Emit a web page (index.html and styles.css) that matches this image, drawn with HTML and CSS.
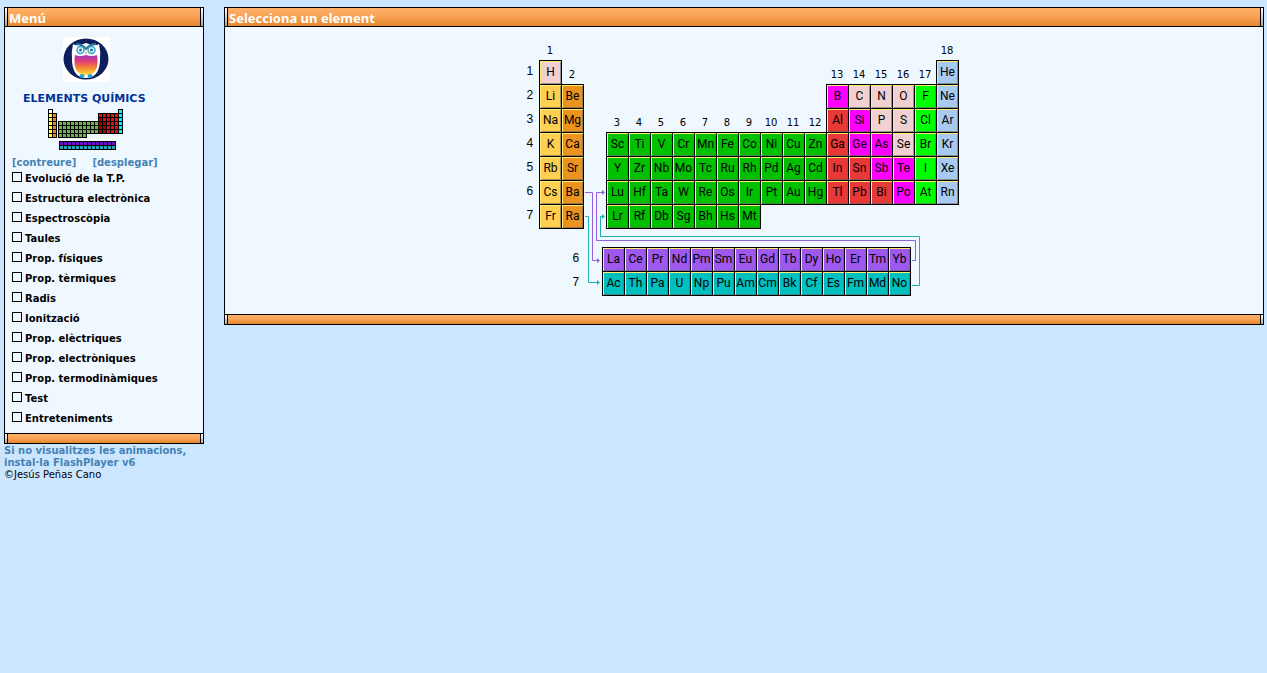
FILE: index.html
```html
<!DOCTYPE html>
<html lang="ca">
<head>
<meta charset="utf-8">
<title>Elements químics</title>
<link rel="stylesheet" href="styles.css">
</head>
<body>
<div class="page">
  <aside class="side">
    <section class="panel">
      <header class="bar"><h2>Menú</h2></header>
      <div class="panel-body menu">
        <svg class="logo" width="47" height="45" viewBox="0 0 47 45" role="img" aria-label="Òliba">
          <defs>
            <linearGradient id="belly" x1="0" y1="0" x2="0" y2="1">
              <stop offset="0" stop-color="#9a3cc0"/>
              <stop offset=".3" stop-color="#e03a78"/>
              <stop offset=".65" stop-color="#f58a30"/>
              <stop offset="1" stop-color="#ffe040"/>
            </linearGradient>
          </defs>
          <rect width="47" height="45" fill="#fff"/>
          <ellipse cx="23" cy="22" rx="22.500" ry="20.500" fill="#0c1f5c"/>
          <path d="M10 7Q14 10 23 6Q32 10 36 7Q38 15 37 24Q36 41 23 41Q10 41 9 24Q8 15 10 7Z" fill="#fff"/>
          <path d="M12 18Q17 20 23 18Q29 20 34 18Q37 38 23 38Q9 38 12 18Z" fill="url(#belly)"/>
          <path d="M13 7Q19 7 23 12Q27 7 33 7" fill="none" stroke="#2a7090" stroke-width="2"/>
          <circle cx="17.500" cy="13" r="3.500" fill="#e8fbff" stroke="#38a4cc" stroke-width="1.500"/>
          <circle cx="28.500" cy="13" r="3.500" fill="#e8fbff" stroke="#38a4cc" stroke-width="1.500"/>
          <circle cx="17.500" cy="13" r="1.500" fill="#28708c"/>
          <circle cx="28.500" cy="13" r="1.500" fill="#28708c"/>
          <path d="M22 15h2l-1 3z" fill="#f0a040"/>
          <ellipse cx="19" cy="39" rx="2.500" ry="2" fill="#2aa0cc"/>
          <ellipse cx="27" cy="39" rx="2.500" ry="2" fill="#2aa0cc"/>
        </svg>
        <h1>ELEMENTS QUÍMICS</h1>
        <svg class="mini" width="75" height="41" viewBox="0 0 75 41" shape-rendering="crispEdges" role="img" aria-label="Taula periòdica">
          <path d="M0 0h4v4H0z" fill="#fff"/>
          <path d="M0 4h4v24H0z" fill="#ffff20"/>
          <path d="M4 4h4v24H4z" fill="#f08020"/>
          <path d="M10 12h40v12H38v4H10z" fill="#70b050"/>
          <path d="M50 4h20v20H50z" fill="#e01010"/>
          <path d="M50 8h4v4h4v12h-8z" fill="#9c0000"/>
          <path d="M70 0h4v24h-4z" fill="#00f4ff"/>
          <path d="M11 32h56v4H11z" fill="#6a10c8"/>
          <path d="M11 36h56v4H11z" fill="#20a8b8"/>
          <g fill="none" stroke="#000">
            <path d="M0 .5h5M0 4.500h9M0 8.500h9M0 12.500h9M0 16.500h9M0 20.500h9M0 24.500h9M0 28.500h9M.5 0v29M4.500 0v29M8.500 4v25"/>
            <path d="M10 12.500h40M10 16.500h40M10 20.500h40M10 24.500h40M10 28.500h29M10.500 12v17M14.500 12v17M18.500 12v17M22.500 12v17M26.500 12v17M30.500 12v17M34.500 12v17M38.500 12v17M42.500 12v13M46.500 12v13"/>
            <path d="M70 .5h5M50 4.500h25M50 8.500h25M50 12.500h25M50 16.500h25M50 20.500h25M50 24.500h25M50.500 4v21M54.500 4v21M58.500 4v21M62.500 4v21M66.500 4v21M70.500 0v25M74.500 0v25"/>
            <path d="M11 32.500h57M11 36.500h57M11 40.500h57M11.500 32v9M15.500 32v9M19.500 32v9M23.500 32v9M27.500 32v9M31.500 32v9M35.500 32v9M39.500 32v9M43.500 32v9M47.500 32v9M51.500 32v9M55.500 32v9M59.500 32v9M63.500 32v9M67.500 32v9"/>
          </g>
        </svg>
        <nav class="toggles"><a href="#">[contreure]</a><a href="#">[desplegar]</a></nav>
        <ul class="items">
          <li><label><input type="checkbox">Evolució de la T.P.</label></li>
          <li><label><input type="checkbox">Estructura electrònica</label></li>
          <li><label><input type="checkbox">Espectroscòpia</label></li>
          <li><label><input type="checkbox">Taules</label></li>
          <li><label><input type="checkbox">Prop. físiques</label></li>
          <li><label><input type="checkbox">Prop. tèrmiques</label></li>
          <li><label><input type="checkbox">Radis</label></li>
          <li><label><input type="checkbox">Ionització</label></li>
          <li><label><input type="checkbox">Prop. elèctriques</label></li>
          <li><label><input type="checkbox">Prop. electròniques</label></li>
          <li><label><input type="checkbox">Prop. termodinàmiques</label></li>
          <li><label><input type="checkbox">Test</label></li>
          <li><label><input type="checkbox">Entreteniments</label></li>
        </ul>
      </div>
      <div class="bar foot"></div>
    </section>
    <footer class="credits"><a href="#">Si no visualitzes les animacions, instal·la FlashPlayer v6</a><p>©Jesús Peñas Cano</p></footer>
  </aside>

  <main class="main">
    <section class="panel">
      <header class="bar"><h2>Selecciona un element</h2></header>
      <div class="panel-body stage">
        <div class="chart">
          <div class="table">
            <div class="periods"><span>1</span><span>2</span><span>3</span><span>4</span><span>5</span><span>6</span><span>7</span></div>
            <div class="group p1 alkali"><b>1</b><a class="nonmetal" href="#">H</a><a href="#">Li</a><a href="#">Na</a><a href="#">K</a><a href="#">Rb</a><a href="#">Cs</a><a href="#">Fr</a></div>
            <div class="group p2 earth"><b>2</b><a href="#">Be</a><a href="#">Mg</a><a href="#">Ca</a><a href="#">Sr</a><a href="#">Ba</a><a href="#">Ra</a></div>
            <div class="gap"></div>
            <div class="group p4 metal"><b>3</b><a href="#">Sc</a><a href="#">Y</a><a href="#">Lu</a><a href="#">Lr</a></div>
            <div class="group p4 metal"><b>4</b><a href="#">Ti</a><a href="#">Zr</a><a href="#">Hf</a><a href="#">Rf</a></div>
            <div class="group p4 metal"><b>5</b><a href="#">V</a><a href="#">Nb</a><a href="#">Ta</a><a href="#">Db</a></div>
            <div class="group p4 metal"><b>6</b><a href="#">Cr</a><a href="#">Mo</a><a href="#">W</a><a href="#">Sg</a></div>
            <div class="group p4 metal"><b>7</b><a href="#">Mn</a><a href="#">Tc</a><a href="#">Re</a><a href="#">Bh</a></div>
            <div class="group p4 metal"><b>8</b><a href="#">Fe</a><a href="#">Ru</a><a href="#">Os</a><a href="#">Hs</a></div>
            <div class="group p4 metal"><b>9</b><a href="#">Co</a><a href="#">Rh</a><a href="#">Ir</a><a href="#">Mt</a></div>
            <div class="group p4 metal"><b>10</b><a href="#">Ni</a><a href="#">Pd</a><a href="#">Pt</a></div>
            <div class="group p4 metal"><b>11</b><a href="#">Cu</a><a href="#">Ag</a><a href="#">Au</a></div>
            <div class="group p4 metal"><b>12</b><a href="#">Zn</a><a href="#">Cd</a><a href="#">Hg</a></div>
            <div class="group p2 poor"><b>13</b><a class="semi" href="#">B</a><a href="#">Al</a><a href="#">Ga</a><a href="#">In</a><a href="#">Tl</a></div>
            <div class="group p2 poor"><b>14</b><a class="nonmetal" href="#">C</a><a class="semi" href="#">Si</a><a class="semi" href="#">Ge</a><a href="#">Sn</a><a href="#">Pb</a></div>
            <div class="group p2 poor"><b>15</b><a class="nonmetal" href="#">N</a><a class="nonmetal" href="#">P</a><a class="semi" href="#">As</a><a class="semi" href="#">Sb</a><a href="#">Bi</a></div>
            <div class="group p2 poor"><b>16</b><a class="nonmetal" href="#">O</a><a class="nonmetal" href="#">S</a><a class="nonmetal" href="#">Se</a><a class="semi" href="#">Te</a><a class="semi" href="#">Po</a></div>
            <div class="group p2 halogen"><b>17</b><a href="#">F</a><a href="#">Cl</a><a href="#">Br</a><a href="#">I</a><a href="#">At</a></div>
            <div class="group p1 noble"><b>18</b><a href="#">He</a><a href="#">Ne</a><a href="#">Ar</a><a href="#">Kr</a><a href="#">Xe</a><a href="#">Rn</a></div>
          </div>
          <div class="series lanthanide"><span>6</span><a href="#">La</a><a href="#">Ce</a><a href="#">Pr</a><a href="#">Nd</a><a href="#">Pm</a><a href="#">Sm</a><a href="#">Eu</a><a href="#">Gd</a><a href="#">Tb</a><a href="#">Dy</a><a href="#">Ho</a><a href="#">Er</a><a href="#">Tm</a><a href="#">Yb</a></div>
          <div class="series actinide"><span>7</span><a href="#">Ac</a><a href="#">Th</a><a href="#">Pa</a><a href="#">U</a><a href="#">Np</a><a href="#">Pu</a><a href="#">Am</a><a href="#">Cm</a><a href="#">Bk</a><a href="#">Cf</a><a href="#">Es</a><a href="#">Fm</a><a href="#">Md</a><a href="#">No</a></div>
          <svg class="links" width="434" height="256" viewBox="0 0 434 256" aria-hidden="true">
            <g fill="none" stroke="#9460dc">
              <path d="M58 152.500H65.500V220.500H71M76 152.500H69.500V200.500H388.500V220.500H385"/>
            </g>
            <g fill="none" stroke="#20b0b0">
              <path d="M58 176.500H61.500V242.500H71M76 176.500H73.500V196.500H392.500V245.500H385"/>
            </g>
            <path d="M70 218v5l3-2.500zM75 150v5l3-2.500z" fill="#9460dc"/>
            <path d="M70 240v5l3-2.500zM75 174v5l3-2.500z" fill="#20b0b0"/>
          </svg>
        </div>
      </div>
      <div class="bar foot"></div>
    </section>
  </main>
</div>
</body>
</html>
```

FILE: styles.css
```css
*, *::before, *::after { box-sizing: border-box; }
body {
  margin: 0;
  background: #cce6ff;
  color: #000;
  font: 10px/12px Verdana, "DejaVu Sans", sans-serif;
}
a { text-decoration: none; }
h1, h2, p, ul { margin: 0; padding: 0; }
.page { display: flex; gap: 20px; align-items: flex-start; padding: 7px 3px 7px 4px; }
.side { flex: 0 0 200px; }
.main { flex: 1; min-width: 0; }

.bar {
  display: flex;
  height: 20px;
  border: 1px solid #000;
  background: linear-gradient(#ffb068, #f9a55a 40%, #e5882f);
}
.bar::before, .bar::after {
  content: "";
  width: 3px;
  background: linear-gradient(#fff, #a8a8b0);
}
.bar::before { border-right: 1px solid #000; }
.bar::after { border-left: 1px solid #000; margin-left: auto; }
.bar h2 {
  padding-left: 1px;
  font: bold 13px/20px "Noto Sans", sans-serif;
  color: #fff;
}
.bar.foot { height: 11px; }
.panel-body { background: #f0f8ff; border: solid #000; border-width: 0 1px; }

.menu {
  display: flex;
  flex-direction: column;
  align-items: flex-start;
  padding: 10px 7px 5px;
}
.logo { margin-left: 51px; }
h1 { margin: 9px 0 0 11px; font-size: 11px; line-height: 16px; color: #003399; white-space: nowrap; }
.mini { margin: 2px 0 0 36px; }
.toggles { display: flex; gap: 16px; height: 12px; margin-top: 6px; line-height: 14px; }
.toggles a, .credits a { color: #4682b4; font-weight: bold; }
.items { list-style: none; }
.items label {
  display: flex;
  gap: 3px;
  height: 20px;
  font-weight: bold;
  line-height: 22px;
}
.items input {
  appearance: none;
  width: 10px;
  height: 10px;
  margin: 4px 0 0;
  border: 1px solid #000;
  background: #f0f8ff;
}
.items input:checked { background: #000; }
.credits { padding-top: 1px; }

.stage { display: flex; justify-content: center; padding: 13px 2px 19px 0; }
.chart { position: relative; font: 12px/23px "Liberation Sans", Arial, sans-serif; }
.table { display: flex; align-items: flex-start; padding-right: 2px; }
.periods { display: flex; flex-direction: column; width: 12px; padding-top: 20px; }
.periods span { height: 24px; }
.gap { width: 23px; }
.group { width: 22px; }
.group b {
  display: block;
  height: 20px;
  padding-left: 1px;
  font: 10px/22px "DejaVu Sans", sans-serif;
  text-align: center;
}
.p2 { margin-top: 24px; }
.p4 { margin-top: 72px; }
.group a, .series a {
  display: block;
  width: 22px;
  height: 24px;
  padding-left: 1px;
  border: solid #000;
  border-width: 1px 0 0 1px;
  box-shadow: inset 1px 1px #ffee70, inset -1px -1px rgba(100, 100, 100, .6), 1px 0 #000, 0 1px #000, 1px 1px #000;
  color: #000;
  font-family: Roboto, sans-serif;
  text-align: center;
}
.series { display: flex; margin-left: 46px; }
.series span { width: 29px; }
.lanthanide { margin-top: 19px; }

.alkali a { background: #ffcf52; }
.earth a { background: #ec921f; }
.metal a { background: #00c000; }
.poor a { background: #e83838; }
.halogen a { background: #00ff00; }
.noble a { background: #a8caf0; }
.lanthanide a { background: #9f58ee; }
.actinide a { background: #00bfbf; }
.group .nonmetal { background: #f0d0d0; }
.group .semi { background: #ff00ff; }

.links { position: absolute; top: 0; left: 0; pointer-events: none; }
```
